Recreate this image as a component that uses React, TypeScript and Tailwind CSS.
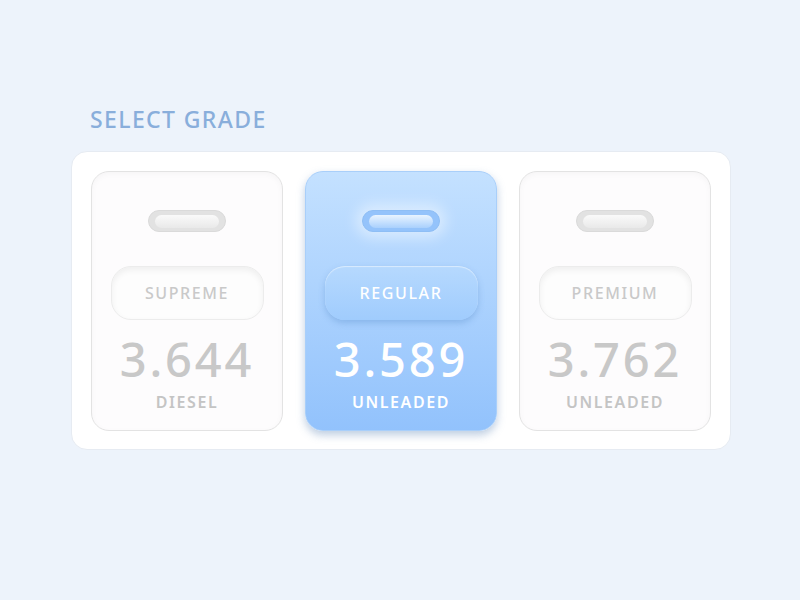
import React from "react";

type Grade = { name: string; price: string; fuel: string; active?: boolean };

const grades: Grade[] = [
  { name: "SUPREME", price: "3.644", fuel: "DIESEL" },
  { name: "REGULAR", price: "3.589", fuel: "UNLEADED", active: true },
  { name: "PREMIUM", price: "3.762", fuel: "UNLEADED" },
];

function Card({ g }: { g: Grade }) {
  if (g.active) {
    return (
      <div className="w-[192px] h-[260px] rounded-[18px] border border-[#a9cffa] bg-gradient-to-b from-[#c4e1ff] to-[#92c2fc] shadow-[0_4px_8px_rgba(90,130,180,0.4)] flex flex-col items-center">
        <div className="mt-[38px] w-[78px] h-[22px] rounded-full bg-[#94c3fb] border border-[#8ebef5] shadow-[0_0_14px_6px_rgba(255,255,255,0.45)] flex items-center justify-center">
          <div className="w-[64px] h-[13px] rounded-full bg-gradient-to-b from-[#e9f4ff] to-[#a9d0fd]" />
        </div>
        <div className="mt-[34px] w-[153px] h-[54px] rounded-[20px] bg-gradient-to-b from-[#b6d9fe] to-[#a0ccfd] shadow-[0_3px_6px_rgba(100,150,210,0.45),inset_0_1px_1px_rgba(255,255,255,0.5)] flex items-center justify-center">
          <span className="text-[16px] tracking-[0.1em] font-medium text-white">{g.name}</span>
        </div>
        <div className="mt-[16px] text-[47px] leading-[46px] font-medium text-white tracking-[0.06em]">{g.price}</div>
        <div className="mt-[8px] text-[16px] font-semibold tracking-[0.1em] text-white">{g.fuel}</div>
      </div>
    );
  }
  return (
    <div className="w-[192px] h-[260px] rounded-[18px] border border-[#e3e3e3] bg-[#fdfcfd] shadow-[inset_0_2px_6px_rgba(0,0,0,0.03)] flex flex-col items-center">
      <div className="mt-[38px] w-[78px] h-[22px] rounded-full bg-[#e2e2e2] border border-[#dadada] flex items-center justify-center">
        <div className="w-[64px] h-[13px] rounded-full bg-gradient-to-b from-[#fafafa] to-[#e9e9e9]" />
      </div>
      <div className="mt-[34px] w-[153px] h-[54px] rounded-[20px] bg-[#fdfdfd] border border-[#ececec] shadow-[inset_0_3px_6px_rgba(0,0,0,0.06)] flex items-center justify-center">
        <span className="text-[16px] tracking-[0.1em] font-medium text-[#c9c9c9]">{g.name}</span>
      </div>
      <div className="mt-[16px] text-[47px] leading-[46px] font-medium text-[#c8c8c8] tracking-[0.06em]">{g.price}</div>
      <div className="mt-[8px] text-[16px] font-semibold tracking-[0.1em] text-[#c4c4c4]">{g.fuel}</div>
    </div>
  );
}

export default function App() {
  return (
    <div className="w-[800px] h-[600px] bg-[#edf3fb] font-['Noto_Sans',sans-serif] pt-[103px] pl-[71px]">
      <h1 className="ml-[19px] text-[23px] leading-[32px] font-medium tracking-[0.06em] text-[#89aedb]">SELECT GRADE</h1>
      <div className="mt-[16px] w-[660px] h-[299px] rounded-[16px] bg-white border border-[#e6ebf2] p-[19px] flex gap-[22px]">
        {grades.map((g) => (
          <Card key={g.name} g={g} />
        ))}
      </div>
    </div>
  );
}
